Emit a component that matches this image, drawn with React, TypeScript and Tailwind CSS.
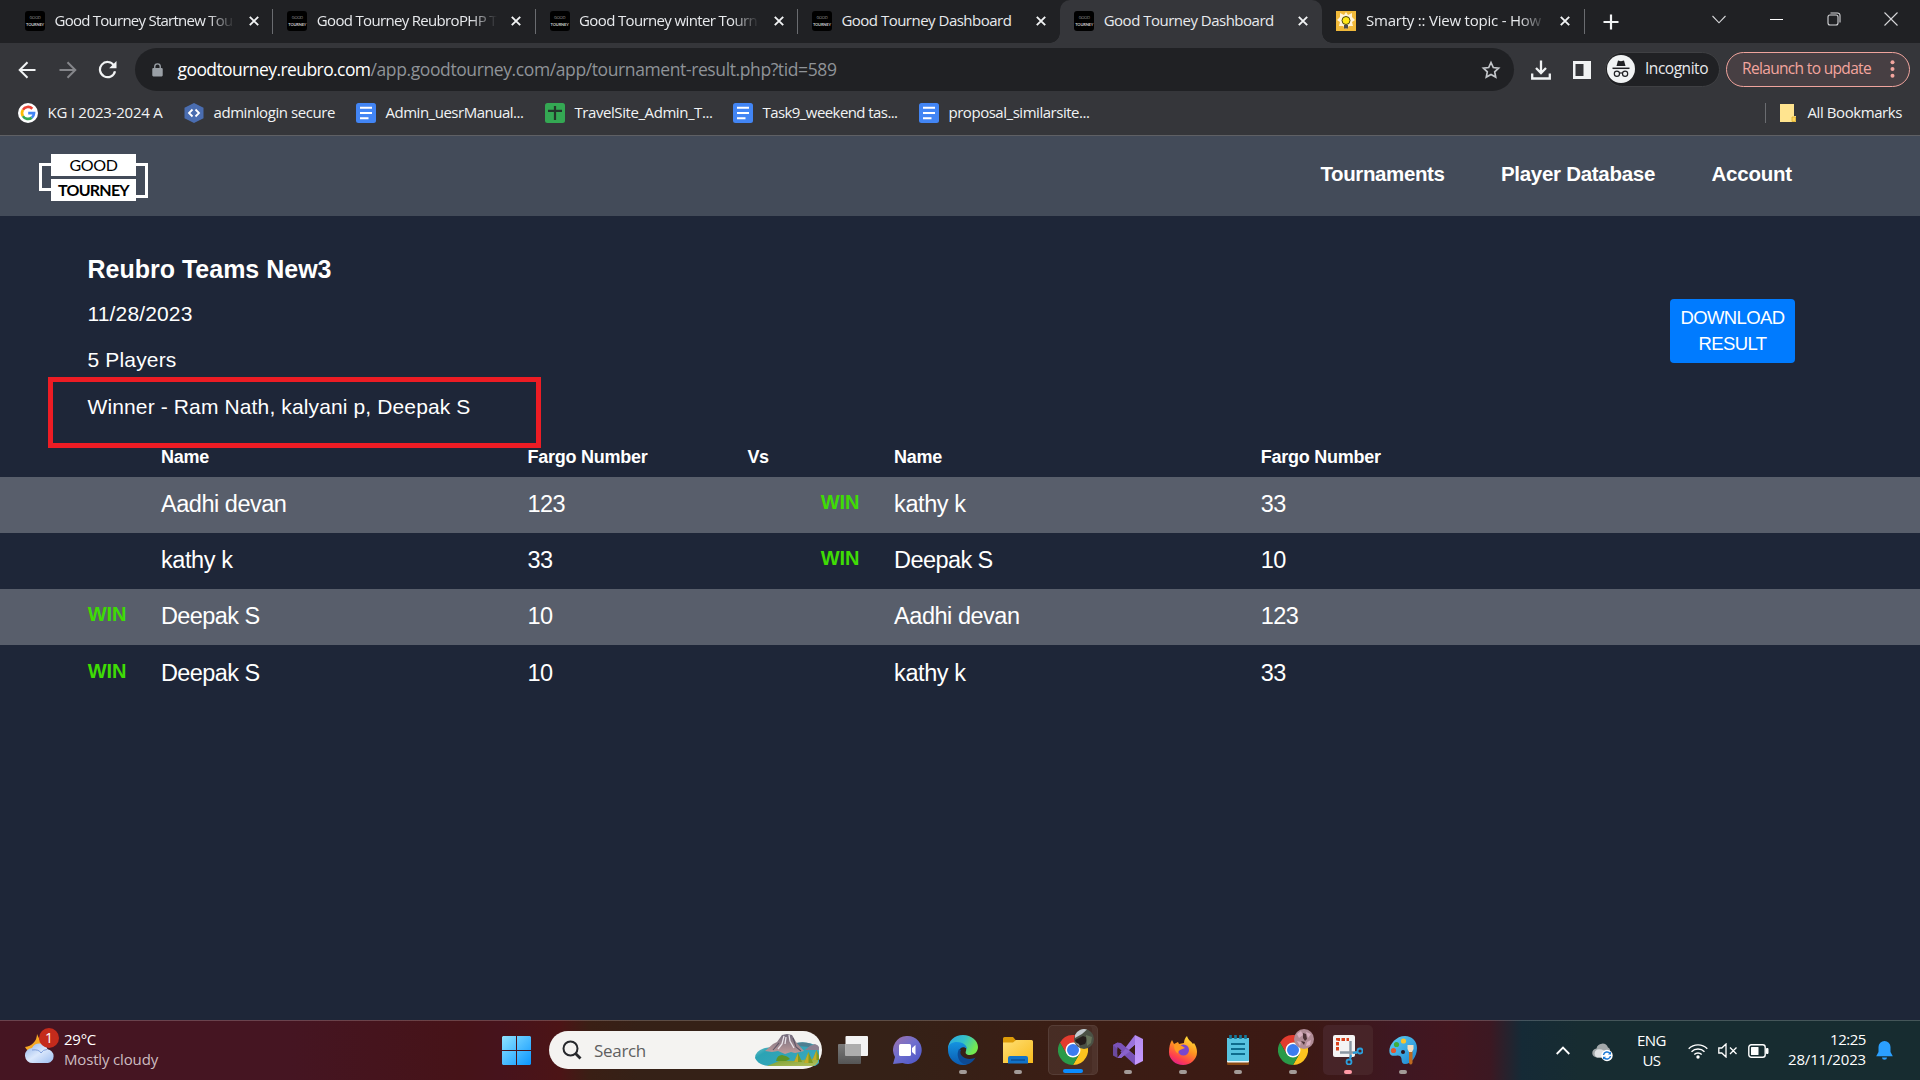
import React, { useLayoutEffect, useRef, useState } from "react";

/* Text whose tracking is adjusted so that it fills the given width. */
function Fit({ w, className = "", children }: { w: number; className?: string; children: string }) {
  const ref = useRef<HTMLSpanElement>(null);
  const [spacing, setSpacing] = useState(0);
  useLayoutEffect(() => {
    if (ref.current) {
      const natural = ref.current.getBoundingClientRect().width;
      setSpacing((w - natural) / children.length);
    }
  }, [w, children]);
  return (
    <span ref={ref} className={`inline-block w-max whitespace-pre ${className}`} style={{ letterSpacing: spacing }}>
      {children}
    </span>
  );
}

function Favicon() {
  return (
    <div className="flex h-5 w-5 shrink-0 flex-col items-center justify-center gap-[3px] rounded-[3px] bg-black font-['Lato'] leading-[4px]">
      <Fit w={11} className="text-[4px] text-[#8a8a8a]">GOOD</Fit>
      <Fit w={18} className="text-[4px] font-bold text-[#c8c8c8]">TOURNEY</Fit>
    </div>
  );
}

function SmartyIcon() {
  return (
    <svg className="h-5 w-5 shrink-0" viewBox="0 0 20 20">
      <rect width="20" height="20" fill="#f0b93a" />
      <path d="M10 1l2 3 4-2 0 4 3 3-3 2 1 4-4 0-3 3-3-3-4 0 1-4-3-2 3-3 0-4 4 2z" fill="#fff3d8" />
      <circle cx="10" cy="9.5" r="4" fill="#ffe715" stroke="#4a4410" strokeWidth="1" />
      <path d="M8 14h4v3.500H8z" fill="#4b4b4b" />
    </svg>
  );
}

function Cross() {
  return (
    <svg className="h-[10px] w-[10px] shrink-0" viewBox="0 0 10 10">
      <path d="M.8.8l8.400 8.400M9.200.8L.8 9.200" stroke="#f1f3f4" strokeWidth="1.900" />
    </svg>
  );
}

const tabs = [
  { title: "Good Tourney Startnew Tou", w: 178, fade: true },
  { title: "Good Tourney ReubroPHP T", w: 180, fade: true },
  { title: "Good Tourney winter Tourn", w: 178, fade: true },
  { title: "Good Tourney Dashboard", w: 170 },
  { title: "Good Tourney Dashboard", w: 170, active: true },
  { title: "Smarty :: View topic - How", w: 175, fade: true, smarty: true },
];

function TabStrip() {
  return (
    <div className="flex h-[43px] bg-[#202124] pl-[11px] text-[15px] text-[#e8eaed]">
      {tabs.map((t, i) => (
        <div
          key={i}
          className={`relative flex h-[43px] w-[262.3px] shrink-0 items-center pb-px ${t.active ? "rounded-t-[10px] bg-[#35363a]" : ""}`}
        >
          {t.active && (
            <>
              <div className="absolute -left-[10px] bottom-0 h-[10px] w-[10px] bg-[radial-gradient(circle_at_0_0,#202124_9.5px,#35363a_10px)]" />
              <div className="absolute -right-[10px] bottom-0 h-[10px] w-[10px] bg-[radial-gradient(circle_at_100%_0,#202124_9.5px,#35363a_10px)]" />
            </>
          )}
          <div className="ml-[14px]">{t.smarty ? <SmartyIcon /> : <Favicon />}</div>
          <div
            className={`ml-[9.500px] w-[180.500px] overflow-hidden pb-[2px] leading-[24px] ${t.fade ? "[mask-image:linear-gradient(to_right,#000_153px,transparent_180px)]" : ""}`}
          >
            <Fit w={t.w}>{t.title}</Fit>
          </div>
          <div className="ml-[14px] flex">
            <Cross />
          </div>
          {!t.active && i !== 3 && <div className="ml-auto h-[25px] w-px bg-[#6a6c70]" />}
        </div>
      ))}
      <div className="ml-[18px] flex h-[43px] items-center">
        <svg width="16" height="16" viewBox="0 0 16 16">
          <path d="M8 .5v15M.5 8h15" stroke="#f1f3f4" strokeWidth="2.200" />
        </svg>
      </div>
      <div className="ml-auto flex h-[38px] items-center text-[#d6d7d9]">
        <div className="flex w-[57.300px] justify-center">
          <svg width="14" height="9" viewBox="0 0 14 9" fill="none" stroke="currentColor" strokeWidth="1.100">
            <path d="M.5 1L7 7.800 13.500 1" />
          </svg>
        </div>
        <div className="flex w-[57.300px] justify-center">
          <div className="h-px w-[13px] bg-white" />
        </div>
        <div className="flex w-[57.300px] justify-center">
          <svg width="14" height="14" viewBox="0 0 14 14" fill="none" stroke="currentColor" strokeWidth="1.100">
            <rect x="1" y="3" width="10" height="10" rx="2" />
            <path d="M3.500 1h7A2.500 2.500 0 0 1 13 3.500v7" />
          </svg>
        </div>
        <div className="flex w-[57.300px] justify-center">
          <svg width="14" height="14" viewBox="0 0 14 14" stroke="currentColor" strokeWidth="1.100">
            <path d="M.5.5l13 13M13.500.5l-13 13" />
          </svg>
        </div>
      </div>
    </div>
  );
}

function Toolbar() {
  return (
    <div className="flex h-[50px] items-center bg-[#35363a] pt-[3px]">
      <svg className="ml-[18px]" width="18" height="18" viewBox="0 0 18 18" fill="none" stroke="#f1f3f4" strokeWidth="2">
        <path d="M17.500 9H2M9.500 1.200L1.700 9l7.800 7.800" />
      </svg>
      <svg className="ml-[23px]" width="18" height="18" viewBox="0 0 18 18" fill="none" stroke="#85868a" strokeWidth="2">
        <path d="M.5 9H16M8.500 1.200L16.300 9l-7.800 7.800" />
      </svg>
      <svg className="ml-[21px]" width="19" height="19" viewBox="0 0 19 19" fill="none" stroke="#f1f3f4" strokeWidth="2.200">
        <path d="M15.800 5.200A7.600 7.600 0 1 0 17 11.200" />
        <path d="M18.500 1v7.300h-7.300z" fill="#f1f3f4" stroke="none" />
      </svg>
      <div className="ml-[18px] flex h-[43px] w-[1379px] items-center rounded-full bg-[#202124] pr-[13px] pl-[17px]">
        <svg width="11" height="16" viewBox="0 0 12 16">
          <path d="M3 7V4.300a3 3 0 0 1 6 0V7" fill="none" stroke="#9aa0a6" strokeWidth="1.500" />
          <rect x=".3" y="5.700" width="11.400" height="9.300" rx="1.200" fill="#9aa0a6" />
        </svg>
        <div className="ml-[14.500px] flex pb-px text-[17.5px] leading-[26px]">
          <Fit w={193} className="text-white">goodtourney.reubro.com</Fit>
          <Fit w={466} className="text-[#8f9398]">/app.goodtourney.com/app/tournament-result.php?tid=589</Fit>
        </div>
        <svg className="ml-auto" width="20" height="20" viewBox="0 0 20 20" fill="none" stroke="#c3c6ca" strokeWidth="1.700">
          <path d="M10 2.500l2.300 5 5.300.6-3.900 3.700 1 5.300L10 14.500l-4.700 2.600 1-5.300L2.400 8.100l5.300-.6z" />
        </svg>
      </div>
      <svg className="ml-[17px]" width="20" height="20" viewBox="0 0 20 20" fill="none" stroke="#f1f3f4" strokeWidth="2.300">
        <path d="M10 .5v12M5 8l5 5 5-5M1.200 13.500v5h17.600v-5" />
      </svg>
      <svg className="ml-[22px]" width="18" height="18" viewBox="0 0 18 18">
        <path d="M0 0h18v18H0zM2.500 3v12h8V3z" fill="#f1f3f4" fillRule="evenodd" />
      </svg>
      <div className="ml-[14px] flex h-[35px] w-[115px] items-center rounded-full border border-[#3f4043] bg-[#202124] pb-[2px] pl-px">
        <svg width="28" height="28" viewBox="0 0 28 28">
          <circle cx="14" cy="14" r="14" fill="#f1f3f4" />
          <path d="M9.500 11l1.500-5.500 3 .7 3-.7L18.500 11z" fill="#202124" />
          <path d="M5.500 13.300h17" stroke="#202124" strokeWidth="1.500" />
          <circle cx="9.900" cy="18.700" r="2.600" fill="none" stroke="#202124" strokeWidth="1.200" />
          <circle cx="18.100" cy="18.700" r="2.600" fill="none" stroke="#202124" strokeWidth="1.200" />
          <path d="M12.500 18.300q1.500-1 3 0" fill="none" stroke="#202124" strokeWidth="1.200" />
        </svg>
        <Fit w={63} className="ml-[10px] text-[15.5px] text-[#e8eaed]">Incognito</Fit>
      </div>
      <div className="ml-[6px] flex h-[35px] w-[184px] items-center rounded-full border-[1.500px] border-[#f0a49d] bg-[#473f43] pb-px pl-[15px] text-[#f3a59e]">
        <Fit w={129} className="text-[15.5px]">Relaunch to update</Fit>
        <svg className="ml-[19px]" width="5" height="18" viewBox="0 0 5 18" fill="currentColor">
          <circle cx="2.500" cy="2.200" r="2" />
          <circle cx="2.500" cy="9" r="2" />
          <circle cx="2.500" cy="15.800" r="2" />
        </svg>
      </div>
    </div>
  );
}

function DocIcon() {
  return (
    <svg width="20" height="20" viewBox="0 0 20 20">
      <rect width="20" height="20" rx="2.500" fill="#4285f4" />
      <path d="M4 4.800h12M4 10h12M4 15.200h8.500" stroke="#fff" strokeWidth="2.100" />
    </svg>
  );
}
function SheetIcon() {
  return (
    <svg width="20" height="20" viewBox="0 0 20 20">
      <rect width="20" height="20" rx="2.500" fill="#34a853" />
      <path d="M10 3v14M3 7.800h14" stroke="#24362b" strokeWidth="2.200" />
    </svg>
  );
}
function HexIcon() {
  return (
    <svg width="20" height="20" viewBox="0 0 20 20">
      <path d="M10 0l9.500 4.800v10.400L10 20 .5 15.200V4.800z" fill="#4a6db0" />
      <path d="M8.500 6.500L5 10l3.500 3.500M11.500 6.500L15 10l-3.500 3.500" fill="none" stroke="#fff" strokeWidth="1.800" />
    </svg>
  );
}
function GoogleIcon() {
  return (
    <svg width="20" height="20" viewBox="0 0 20 20">
      <circle cx="10" cy="10" r="10" fill="#fff" />
      <g fill="none" strokeWidth="2.700">
        <path d="M14.300 5.700A6 6 0 0 0 4.900 6.900" stroke="#ea4335" />
        <path d="M4.900 6.900a6 6 0 0 0 0 6.200" stroke="#fbbc05" />
        <path d="M4.900 13.100a6 6 0 0 0 8.900 1.500" stroke="#34a853" />
        <path d="M13.800 14.600A6 6 0 0 0 16 10.200h-5.800" stroke="#4285f4" />
      </g>
    </svg>
  );
}

const bookmarks = [
  { icon: <GoogleIcon />, label: "KG I 2023-2024 A", w: 115, box: 136 },
  { icon: <HexIcon />, label: "adminlogin secure", w: 121.5, box: 142 },
  { icon: <DocIcon />, label: "Admin_uesrManual...", w: 138, box: 159 },
  { icon: <SheetIcon />, label: "TravelSite_Admin_T...", w: 138, box: 158 },
  { icon: <DocIcon />, label: "Task9_weekend tas...", w: 135, box: 156 },
  { icon: <DocIcon />, label: "proposal_similarsite...", w: 141, box: 161 },
];

function Bookmarks() {
  return (
    <div className="flex h-[43px] items-center border-b border-[#5f6064] bg-[#35363a] pr-[18px] pb-[3px] pl-[18px] text-[15px] text-[#f1f3f4]">
      {bookmarks.map((b) => (
        <div key={b.label} className="flex items-center">
          {b.icon}
          <div className="ml-[9.500px]" style={{ width: b.box + 0.5 }}>
            <Fit w={b.w}>{b.label}</Fit>
          </div>
        </div>
      ))}
      <div className="ml-auto flex items-center">
        <div className="h-5 w-px bg-[#6a6c70]" />
        <svg className="mr-[12px] ml-[14px]" width="16" height="18" viewBox="0 0 16 18">
          <path d="M0 0h14v12h2v6H0z" fill="#ffe48f" />
          <path d="M12 13h3.500v4.500H12z" fill="#ffd65c" stroke="#dcae2e" strokeWidth=".8" />
        </svg>
        <Fit w={94.5}>All Bookmarks</Fit>
      </div>
    </div>
  );
}

function Logo() {
  return (
    <div className="flex h-[47px] w-[109px] items-start">
      <div className="mt-[9px] h-[28px] w-[12px] border-y-[3px] border-l-[3px] border-white" />
      <div className="flex w-[85px] flex-col gap-[3px] text-center font-['Lato'] text-[16px] leading-[22px] text-black">
        <div className="h-[22px] bg-white">
          <Fit w={48}>GOOD</Fit>
        </div>
        <div className="h-[22px] bg-white">
          <Fit w={71} className="font-bold">TOURNEY</Fit>
        </div>
      </div>
      <div className="mt-[9px] h-[35px] w-[12px] border-y-[3px] border-r-[3px] border-white" />
    </div>
  );
}

const nameWidths: Record<string, number> = { "Aadhi devan": 125.5, "kathy k": 71.5, "Deepak S": 98.5, "123": 37.5, "33": 25, "10": 25 };

const matches = [
  { lw: "", l: "Aadhi devan", lf: "123", rw: "WIN", r: "kathy k", rf: "33" },
  { lw: "", l: "kathy k", lf: "33", rw: "WIN", r: "Deepak S", rf: "10" },
  { lw: "WIN", l: "Deepak S", lf: "10", rw: "", r: "Aadhi devan", rf: "123" },
  { lw: "WIN", l: "Deepak S", lf: "10", rw: "", r: "kathy k", rf: "33" },
];

function Cell({ text }: { text: string }) {
  return (
    <span>
      <Fit w={nameWidths[text]}>{text}</Fit>
    </span>
  );
}

function Page() {
  return (
    <div className="flex h-[884px] flex-col bg-[#1e2638] font-['Liberation_Sans',Arial,sans-serif] text-white">
      <header className="flex h-[80px] shrink-0 items-center justify-between bg-[#434b59] pr-[128px] pb-px pl-[39px]">
        <div className="pt-[4px]">
          <Logo />
        </div>
        <nav className="flex gap-[56.500px] pb-[3px] text-[20.500px] font-bold">
          <Fit w={124}>Tournaments</Fit>
          <Fit w={154}>Player Database</Fit>
          <Fit w={80.5}>Account</Fit>
        </nav>
      </header>

      <section className="flex h-[228px] shrink-0 justify-between pr-[125px] pl-[87.5px]">
        <div className="relative pt-[36px]">
          <h1 className="h-[46px] text-[25px] leading-[34px] font-bold">
            <Fit w={244}>Reubro Teams New3</Fit>
          </h1>
          <div className="h-[46px] text-[21px] leading-[32px]">
            <Fit w={105}>11/28/2023</Fit>
          </div>
          <div className="h-[47px] text-[21px] leading-[32px]">
            <Fit w={89}>5 Players</Fit>
          </div>
          <div className="text-[21px] leading-[32px]">
            <Fit w={383}>Winner - Ram Nath, kalyani p, Deepak S</Fit>
          </div>
          <div className="absolute top-[161px] -left-[39.500px] h-[71px] w-[493px] border-[5px] border-[#ed1c24]" />
        </div>
        <button className="mt-[83px] flex h-[64px] w-[125px] flex-col items-center justify-center rounded-[4px] bg-[#007bff] text-[18.5px] leading-[26px]">
          <Fit w={104}>DOWNLOAD</Fit>
          <Fit w={68}>RESULT</Fit>
        </button>
      </section>

      <section>
        <div className="grid h-[33px] grid-cols-[73.3px_366.5px_219.9px_146.7px_366.7px_1fr] pt-[2px] pl-[87.7px] text-[18px] leading-[22px] font-bold">
          <span />
          <span><Fit w={48}>Name</Fit></span>
          <span><Fit w={120}>Fargo Number</Fit></span>
          <span><Fit w={21.5}>Vs</Fit></span>
          <span><Fit w={48}>Name</Fit></span>
          <span><Fit w={120}>Fargo Number</Fit></span>
        </div>
        {matches.map((m, i) => (
          <div
            key={i}
            className={`grid h-[56px] grid-cols-[73.3px_366.5px_293.3px_73.3px_366.7px_1fr] pl-[87.7px] text-[23.5px] leading-[55px] ${i % 2 ? "last:pt-px" : "bg-[#585e6b]"}`}
          >
            <span className="text-[20px] leading-[51px] font-bold tracking-[-0.1px] text-[#3fdb05]">{m.lw}</span>
            <Cell text={m.l} />
            <Cell text={m.lf} />
            <span className="text-[20px] leading-[51px] font-bold tracking-[-0.1px] text-[#3fdb05]">{m.rw}</span>
            <Cell text={m.r} />
            <Cell text={m.rf} />
          </div>
        ))}
      </section>
    </div>
  );
}

/* ---- taskbar artwork ---- */

function Weather() {
  return (
    <div className="relative h-[36px] w-[34px]">
      <svg className="absolute top-[6px] left-0" width="31" height="30" viewBox="0 0 31 30">
        <defs>
          <linearGradient id="wc" x1="0" y1="0" x2="1" y2="1">
            <stop offset="0" stopColor="#8fb2ea" />
            <stop offset=".5" stopColor="#dbe8fc" />
            <stop offset="1" stopColor="#9dbdf0" />
          </linearGradient>
        </defs>
        <path d="M12 0a13 13 0 0 1-12 13 10 10 0 0 0 18 0z" fill="#f7a823" />
        <path d="M8 29a7.500 7.500 0 0 1-1-15 8.500 8.500 0 0 1 15.500 1.200A7 7 0 0 1 23 29z" fill="url(#wc)" />
        <path d="M7 16q7-1 9 3M22 15.500q-4 0-6 3.500" fill="none" stroke="#7f9fdc" strokeWidth="1" />
      </svg>
      <div className="absolute top-0 left-[14px] flex h-5 w-5 items-center justify-center rounded-full bg-[#c42b1c] text-[14px] leading-none text-white">1</div>
    </div>
  );
}

function StartIcon() {
  return (
    <svg width="29" height="29" viewBox="0 0 29 29">
      <defs>
        <linearGradient id="st" x1="0" y1="0" x2="29" y2="29" gradientUnits="userSpaceOnUse">
          <stop offset="0" stopColor="#8fe3ff" />
          <stop offset="1" stopColor="#0a96ff" />
        </linearGradient>
      </defs>
      <path d="M1 0h13v14H0V1zM15 0h13l1 1v13H15zM0 15h14v14H1l-1-1zM15 15h14v13l-1 1H15z" fill="url(#st)" />
    </svg>
  );
}

function SearchArt() {
  return (
    <svg width="64" height="32" viewBox="0 0 64 32">
      <defs>
        <linearGradient id="lake" x1="0" y1="0" x2="1" y2=".6">
          <stop offset="0" stopColor="#8fd3d6" />
          <stop offset=".3" stopColor="#2ba3b4" />
          <stop offset="1" stopColor="#3aa7bd" />
        </linearGradient>
        <linearGradient id="mt" x1="0" y1="0" x2="0" y2="1">
          <stop offset="0" stopColor="#716a7c" />
          <stop offset="1" stopColor="#c09c9c" />
        </linearGradient>
        <linearGradient id="grass" x1="0" y1="0" x2="1" y2="1">
          <stop offset="0" stopColor="#6f9a2a" />
          <stop offset="1" stopColor="#b5c060" />
        </linearGradient>
      </defs>
      <path d="M42 9q10-2 21 3l1 5v12q-2 2-4 3H14Q3 31 0 24q0-7 10-10z" fill="url(#lake)" />
      <path d="M41 9q8-2 16 1l-3 3-11-1z" fill="#4d7f92" />
      <path d="M50 16q5-5 10-6 3 1 4 3v3z" fill="#8d8091" />
      <path d="M10 17l8-7 4-2 5-7 5-1 5 1 4 7 8 9-9 2-4-1-6 2-7-3-6 1z" fill="url(#mt)" />
      <path d="M29 2l-2 8-4 5M34 1l1 6 4 7M31 3l-1 7" stroke="#e9e3ea" strokeWidth="1.300" fill="none" />
      <path d="M38 4l3 9 5 4M24 9l-6 7" stroke="#5b5566" strokeWidth="1.100" fill="none" />
      <path d="M12 32q8-3 14-6 8 1 14 1l23-3v4q-2 3-5 4z" fill="url(#grass)" />
      <path d="M21 27q1-6 6-6 6 1 8 4l-4 2z" fill="#5f9426" />
      <path d="M39 28l4-9 4 9zM49 29l4.500-11L58 29zM57.500 26l4-10L64 22v4z" fill="#7d9a22" />
      <path d="M43 19v9h-4zM53.500 18v11H49zM61.500 16v10h-4z" fill="#c2ac28" />
    </svg>
  );
}

function TaskView() {
  return (
    <svg width="30" height="28" viewBox="0 0 30 28">
      <defs>
        <linearGradient id="tv" x1="0" y1="0" x2="0" y2="1">
          <stop offset="0" stopColor="#7a7a7a" />
          <stop offset="1" stopColor="#555" />
        </linearGradient>
      </defs>
      <rect x="0" y="8" width="23" height="20" rx="1" fill="url(#tv)" />
      <rect x="7.500" y="0" width="22.500" height="20" rx="1" fill="#f3f3f3" />
      <path d="M7.500 8H23v12H7.500z" fill="#adadad" />
    </svg>
  );
}

function Chat() {
  return (
    <svg width="29" height="28" viewBox="0 0 29 28">
      <defs>
        <linearGradient id="ch" x1="0" y1="0" x2=".8" y2="1">
          <stop offset="0" stopColor="#a070a8" />
          <stop offset=".5" stopColor="#6f6fce" />
          <stop offset="1" stopColor="#5058c8" />
        </linearGradient>
      </defs>
      <path d="M14.500 0a14 14 0 1 1-5 27L0 28l2-7A14 14 0 0 1 14.500 0z" fill="url(#ch)" />
      <rect x="6" y="8" width="12" height="12" rx="1.500" fill="#fff" />
      <path d="M19 12l3.500-3v10L19 16z" fill="#fff" />
    </svg>
  );
}

function Edge() {
  return (
    <svg width="30" height="30" viewBox="0 0 30 30">
      <defs>
        <linearGradient id="e1" x1="0" y1="0" x2="1" y2=".4">
          <stop offset="0" stopColor="#2aa5e5" />
          <stop offset=".55" stopColor="#35c1c8" />
          <stop offset="1" stopColor="#74ea50" />
        </linearGradient>
        <linearGradient id="e2" x1="0" y1="0" x2="0" y2="1">
          <stop offset="0" stopColor="#1593e0" />
          <stop offset="1" stopColor="#0a5ab0" />
        </linearGradient>
      </defs>
      <path d="M0 14C0 6 6.500 0 15 0s15 6 15 12c0 5-4 8-8 8-4 0-5-2-4-4 1-4-1-5-3-5z" fill="url(#e1)" />
      <path d="M0 15C0 9 4 7 9 7c7 0 10 4 10 7-3-3-7-2-8 2-1 5 3 12 8 13.500-1 .4-3 .5-4 .5C6.500 30 0 23 0 15z" fill="url(#e2)" />
      <path d="M11 14c-4 8 2 16 8 15.500 4-1 7-4 8.500-7C23 25 17 24 14 21c-2-2-2-4-1-6z" fill="#0d4a94" />
    </svg>
  );
}

function Explorer() {
  return (
    <svg width="30" height="27" viewBox="0 0 30 27">
      <defs>
        <linearGradient id="ex" x1="0" y1="0" x2="1" y2="1">
          <stop offset="0" stopColor="#ffdf75" />
          <stop offset="1" stopColor="#f8bb1c" />
        </linearGradient>
      </defs>
      <path d="M0 1.500Q0 0 1.500 0H10l3.500 4H28v4H0z" fill="#dd9b08" />
      <path d="M0 5.500h10l3-2.500h15.500Q30 3 30 4.500V26H0z" fill="url(#ex)" />
      <path d="M5 21q0-2 2-2h16q2 0 2 2v5.500H5z" fill="#1273c9" />
      <path d="M8 23h14" stroke="#0b4f94" strokeWidth="1.500" />
    </svg>
  );
}

function Chrome({ garden = false }: { garden?: boolean }) {
  return (
    <div className="relative h-[30px] w-[30px]">
      <svg width="30" height="30" viewBox="0 0 30 30">
        <path d="M2 7.500A15 15 0 0 1 28 7.500H15L8.500 18.800z" fill="#e33b2e" />
        <path d="M28 7.500A15 15 0 0 1 15 30l6.500-11.200L15 7.500z" fill="#fcc31e" />
        <path d="M2 7.500A15 15 0 0 0 15 30l6.500-11.200h-13z" fill="#2a9a48" />
        <circle cx="15" cy="15" r="7.500" fill="#fff" />
        <circle cx="15" cy="15" r="6" fill="#3b7cf0" />
      </svg>
      <svg className="absolute -top-[6px] -right-[6px]" width="20" height="20" viewBox="0 0 20 20">
        {garden ? (
          <>
            <circle cx="10" cy="10" r="10" fill="#b08c96" />
            <path d="M3 5l4-3 2 4-4 3zM12 3l5 2-3 4zM3 12l4 1-1 4zM13 13l4-2-1 5-4 1z" fill="#d8b0c0" />
            <path d="M9 4l3 1 1 5-2 2-2-3zM7 12l4 1-1 3z" fill="#4c3236" />
          </>
        ) : (
          <>
            <circle cx="10" cy="10" r="10" fill="#4b5145" />
            <path d="M1 6a10 10 0 0 1 12-5.500L8 5l-7 4z" fill="#c5cbd0" />
            <path d="M1 11l8-4 5 2-3 6-7 2z" fill="#251d1b" />
            <path d="M1 13l4 2 1 3a10 10 0 0 1-5-5z" fill="#8d8a88" />
            <path d="M12 6l6 2-1 6-4 3z" fill="#66735a" />
          </>
        )}
      </svg>
    </div>
  );
}

function VisualStudio() {
  return (
    <svg width="30" height="30" viewBox="0 0 30 30">
      <defs>
        <linearGradient id="vs" x1="0" y1="0" x2="0" y2="1">
          <stop offset="0" stopColor="#b58cf0" />
          <stop offset="1" stopColor="#c79aff" />
        </linearGradient>
      </defs>
      <path d="M0 10l4.500-2.500V23L0 20.500z" fill="#6b4a9e" />
      <path d="M4.500 23L22 0v10L8 23z" fill="#9b72dd" />
      <path d="M4.500 7.500L8 8l14 12v10L0 10z" fill="#7a52b8" />
      <path d="M4.500 23l8-9 5 2L8 23z" fill="#8a62cc" />
      <path d="M22 0l8 4v22l-8 4z" fill="url(#vs)" />
      <path d="M4.500 12l4 3.500-4 4zM22 10v10l-6-5z" fill="#3a1c14" />
    </svg>
  );
}

function Firefox() {
  return (
    <svg width="28" height="29" viewBox="0 0 28 29">
      <defs>
        <linearGradient id="ff" x1=".8" y1="0" x2=".3" y2="1">
          <stop offset="0" stopColor="#ffe83c" />
          <stop offset=".45" stopColor="#ff9320" />
          <stop offset=".8" stopColor="#ff3f4e" />
          <stop offset="1" stopColor="#e0208c" />
        </linearGradient>
      </defs>
      <path d="M3 4l2 4 4-2 1 2 5-1c0-3 1-5 3-7 1 4 4 5 6 8l1-1c2 3 3 6 3 9a14 13 0 0 1-28 0c0-5 1-9 3-12z" fill="url(#ff)" />
      <circle cx="14.500" cy="14" r="5.500" fill="#7a46cf" />
      <path d="M5 9q4-2 8 1l3 2-4 1.500q-3 1-3 4-4-2-4-8.500z" fill="#ff9a22" />
    </svg>
  );
}

function Notepad() {
  return (
    <svg width="22" height="30" viewBox="0 0 22 30">
      <rect y="26" width="22" height="4" rx="1" fill="#8c4a14" />
      <rect y="3" width="22" height="24.500" rx="1" fill="#e9f6fa" />
      <rect y="3" width="22" height="23" rx="1" fill="#57c3e0" />
      <path d="M3.500 0v4M8.500 0v4M13.500 0v4M18.500 0v4" stroke="#147a9d" strokeWidth="2.600" />
      <path d="M4 9h14M4 14h14M4 19h14" stroke="#0e6c8d" strokeWidth="1.800" />
    </svg>
  );
}

function Snip() {
  return (
    <svg width="30" height="30" viewBox="0 0 30 30">
      <rect width="22" height="22" rx="2" fill="#f4f4f4" />
      <path d="M4.500 15.500V4.500H16" fill="none" stroke="#d8401a" strokeWidth="3" strokeDasharray="3.500 1.500" />
      <path d="M17.500 6v17M7 17.500h17" stroke="#8b98a3" strokeWidth="2.400" />
      <circle cx="27" cy="16" r="2.500" fill="none" stroke="#2a9fdc" strokeWidth="1.800" />
      <circle cx="16" cy="27" r="2.500" fill="none" stroke="#2a9fdc" strokeWidth="1.800" />
      <path d="M20 18l5-1M18 20l-1 5" stroke="#2a9fdc" strokeWidth="1.800" />
    </svg>
  );
}

function Paint() {
  return (
    <svg width="28" height="29" viewBox="0 0 28 29">
      <defs>
        <linearGradient id="pt" x1="0" y1="0" x2="1" y2="1">
          <stop offset="0" stopColor="#5ed0f5" />
          <stop offset="1" stopColor="#1b84cf" />
        </linearGradient>
      </defs>
      <path d="M16 0c7 0 12 5 12 12 0 9-6 16-12 16-5 0-2-6-5-8s-7 2-10-2C-2 11 6 0 16 0z" fill="url(#pt)" />
      <circle cx="14.500" cy="5" r="2.600" fill="#f9c52c" />
      <circle cx="7.500" cy="8.500" r="2.600" fill="#3fae3b" />
      <circle cx="4.500" cy="14.500" r="2.600" fill="#e2562e" />
      <circle cx="14" cy="16" r="2" fill="#2b1620" />
      <path d="M20 15h3.500v12q-1.700 3-3.500 0z" fill="#bd6a20" />
      <path d="M18.500 9h6v4l-1.500 3h-3l-1.500-3z" fill="#f2dfc3" />
    </svg>
  );
}

const apps = [
  { icon: <Edge />, mark: "w-2 bg-[#a39b98]", tile: "" },
  { icon: <Explorer />, mark: "w-2 bg-[#a39b98]", tile: "" },
  { icon: <Chrome />, mark: "w-5 bg-[#0a8cff]", tile: "rounded-[5px] border border-white/8 bg-white/7 shadow-[inset_-5px_0_0_rgba(255,255,255,0.03)]" },
  { icon: <VisualStudio />, mark: "w-2 bg-[#a39b98]", tile: "" },
  { icon: <Firefox />, mark: "w-2 bg-[#a39b98]", tile: "" },
  { icon: <Notepad />, mark: "w-2 bg-[#a39b98]", tile: "" },
  { icon: <Chrome garden />, mark: "w-2 bg-[#a39b98]", tile: "" },
  { icon: <Snip />, mark: "w-2 bg-[#ff9aa5]", tile: "rounded-[5px] bg-[#472428]" },
  { icon: <Paint />, mark: "w-2 bg-[#a39b98]", tile: "" },
];

function Taskbar() {
  return (
    <div className="flex h-[60px] items-start border-t border-white/20 bg-[linear-gradient(to_right,#451522_0px,#451522_290px,#461318_460px,#46131c_500px,#4c1416_560px,#3a1f15_590px,#352117_640px,#352117_900px,#3b1d14_1080px,#3c1914_1300px,#3e1722_1400px,#43161f_1450px,#3c1822_1490px,#152a36_1522px,#172c31_1580px,#172c30_1920px)] text-[15px] text-white">
      <div className="flex w-[502px] items-start pl-[25px]">
        <div className="pt-[7px]">
          <Weather />
        </div>
        <div className="ml-[5px] flex flex-col items-start pt-[8px] leading-5">
          <Fit w={32}>29°C</Fit>
          <Fit w={94} className="text-[#cdbcc0]">Mostly cloudy</Fit>
        </div>
      </div>
      <div className="pt-[15px]">
        <StartIcon />
      </div>
      <div className="mt-[10px] ml-[18px] flex h-[38px] w-[273px] items-center rounded-full bg-[#f4f3f1] pl-[13px]">
        <svg width="20" height="20" viewBox="0 0 20 20" fill="none" stroke="#26282c">
          <circle cx="8.500" cy="8.500" r="7" strokeWidth="2" />
          <path d="M13.500 13.500l5 5" strokeWidth="2.800" />
        </svg>
        <Fit w={52} className="ml-[12px] pt-px text-[17px] text-[#5f5f5f]">Search</Fit>
        <div className="ml-auto pr-[3px]">
          <SearchArt />
        </div>
      </div>
      <div className="mt-[15px] ml-[16px]">
        <TaskView />
      </div>
      <div className="mt-[15px] ml-[25px]">
        <Chat />
      </div>
      <div className="ml-[16px] flex gap-[5px] pt-[4px]">
        {apps.map((a, i) => (
          <div key={i} className={`relative flex h-[50px] w-[50px] items-center justify-center ${a.tile}`}>
            {a.icon}
            <div className={`absolute bottom-px left-1/2 h-[4px] -translate-x-1/2 rounded-full ${a.mark}`} />
          </div>
        ))}
      </div>
      <div className="ml-auto flex h-[59px] items-center pr-[27px]">
        <svg width="14" height="9" viewBox="0 0 14 9" fill="none" stroke="#fff" strokeWidth="1.800">
          <path d="M.7 8L7 1.500 13.300 8" />
        </svg>
        <svg className="mt-[3px] ml-[22px]" width="22" height="19" viewBox="0 0 22 19">
          <path d="M5 14.500a4.500 4.500 0 0 1-.5-9 6 6 0 0 1 11.500-1q3 1 2 7l-3 3z" fill="#a3a8aa" />
          <path d="M5 14.500a4.500 4.500 0 0 1 0-8q7-1 9 4l-2 4z" fill="#dfe2e4" />
          <circle cx="15" cy="12.500" r="5.700" fill="#fff" />
          <path d="M11.500 12a3.600 3.600 0 0 1 6.500-1.500M18.500 13a3.600 3.600 0 0 1-6.500 1.500" fill="none" stroke="#1878d4" strokeWidth="1.500" />
          <path d="M16 11.500h3v-3zM14 13.700h-3v3z" fill="#1878d4" />
        </svg>
        <div className="ml-[22px] flex w-[31px] flex-col items-center pb-[2px] leading-5">
          <Fit w={29}>ENG</Fit>
          <Fit w={18}>US</Fit>
        </div>
        <svg className="ml-[21px]" width="20" height="16" viewBox="0 0 20 16" fill="none" stroke="#fff" strokeWidth="1.400">
          <path d="M.7 5.700a13.200 13.200 0 0 1 18.600 0M3.500 8.700a9.200 9.200 0 0 1 13 0M6.300 11.500a5.200 5.200 0 0 1 7.400 0" />
          <circle cx="10" cy="14" r="1.700" fill="#fff" stroke="none" />
        </svg>
        <svg className="ml-[10px]" width="20" height="15" viewBox="0 0 20 15" fill="none" stroke="#fff" strokeWidth="1.300">
          <path d="M.8 5h3L8 1v13L3.800 10h-3zM12 4.500l6.500 6.500M18.500 4.500L12 11" />
        </svg>
        <svg className="ml-[10px]" width="21" height="14" viewBox="0 0 21 14">
          <rect x=".8" y=".8" width="16.400" height="12.400" rx="2.500" fill="none" stroke="#fff" strokeWidth="1.400" />
          <rect x="3" y="3" width="7.500" height="8" rx=".5" fill="#fff" />
          <path d="M18.500 4.500h1.500v5h-1.500z" fill="#fff" stroke="#fff" />
        </svg>
        <div className="ml-[19px] flex flex-col items-end pb-[3px] leading-5">
          <Fit w={36}>12:25</Fit>
          <Fit w={78}>28/11/2023</Fit>
        </div>
        <svg className="ml-[10px]" width="17" height="19" viewBox="0 0 17 19" fill="#2ba0ff">
          <path d="M8.500 0a6 6 0 0 1 6 6v5l2.300 4.300H.2L2.500 11V6a6 6 0 0 1 6-6zM6 16.500h5a2.500 2.200 0 0 1-5 0z" />
        </svg>
      </div>
    </div>
  );
}

export default function App() {
  return (
    <div className="h-[1080px] w-[1920px] overflow-hidden bg-[#1e2638] font-['Open_Sans','Noto_Sans',sans-serif]">
      <TabStrip />
      <Toolbar />
      <Bookmarks />
      <Page />
      <Taskbar />
    </div>
  );
}
